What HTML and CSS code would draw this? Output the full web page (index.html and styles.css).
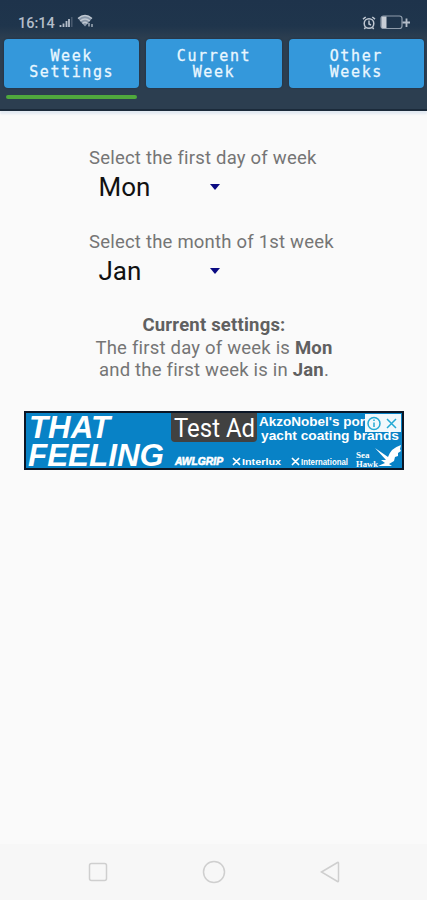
FILE: index.html
```html
<!DOCTYPE html>
<html lang="en">
<head>
    <meta charset="UTF-8">
    <meta name="viewport" content="width=device-width, initial-scale=1.0">
    <title>Week Settings</title>
    <link rel="stylesheet" href="styles.css">
</head>
<body>
    <header class="header">
        <div class="status-bar">
            <span class="clock">16:14</span>
            <svg class="signal" width="14" height="12" viewBox="0 0 14 12">
                <path d="M1.5 11V9M4.5 11V7.5M7.5 11V5M10 11V3" stroke="#b4bdc9" stroke-width="1.8"/>
                <path d="M12.8 11V1" stroke="#4d5e73" stroke-width="1.4"/>
            </svg>
            <svg class="wifi" width="18" height="15" viewBox="0 0 18 15">
                <path d="M1 4.5Q8 -1.8 15 4.5L8 12.5Z" fill="#8796a8"/>
                <path d="M1 4.6Q8 -1.6 15 4.6M3.2 7Q8 2.8 12.8 7M5.5 9.5Q8 7.2 10.5 9.5" fill="none" stroke="#c0c8d2" stroke-width="1.4"/>
                <path d="M12 9v3.500M15 10v3" stroke="#c0c8d2" stroke-width="1.2"/>
            </svg>
            <svg class="alarm" width="14" height="14" viewBox="0 0 14 14" fill="none" stroke="#c0c8d2" stroke-width="1.5">
                <circle cx="7" cy="7.5" r="4.8"/>
                <path d="M1 3.2L3.7 1M10.3 1L13 3.2M7 4.5V8L9 9M3.5 11.5L2.3 13M10.5 11.5L11.7 13"/>
            </svg>
            <svg class="battery" width="31" height="15" viewBox="0 0 31 15">
                <rect x="1" y="1" width="21" height="12.5" rx="2.5" fill="none" stroke="#8f9cab" stroke-width="1.2"/>
                <path d="M3 1.5H6.5V13H3Q1.5 13 1.5 11.5V3Q1.5 1.5 3 1.5Z" fill="#c8ced6"/>
                <path d="M22.500 7.500H30M26.500 3.500V12" stroke="#b4bdc9" stroke-width="1.8"/>
            </svg>
        </div>
        <nav class="tabs">
            <button class="tab active">Week<br>Settings</button>
            <button class="tab">Current<br>Week</button>
            <button class="tab">Other<br>Weeks</button>
        </nav>
    </header>

    <main class="content">
        <div class="field">
            <label class="label">Select the first day of week</label>
            <div class="select"><span class="value">Mon</span><span class="arrow"></span></div>
        </div>
        <div class="field">
            <label class="label">Select the month of 1st week</label>
            <div class="select"><span class="value">Jan</span><span class="arrow"></span></div>
        </div>
        <p class="summary">
            <strong>Current settings:</strong><br>
            The first day of week is <strong>Mon</strong><br>
            and the first week is in <strong>Jan</strong>.
        </p>
        <svg class="ad" width="380" height="59" viewBox="0 0 380 59">
            <rect width="380" height="59" fill="#0b1626"/>
            <rect x="2" y="2" width="376" height="55" fill="#0882c6"/>
            <g class="ad-slogan">
                <text x="5" y="26.500" textLength="81" lengthAdjust="spacingAndGlyphs">THAT</text>
                <text x="4" y="54.500" textLength="136" lengthAdjust="spacingAndGlyphs">FEELING</text>
            </g>
            <g class="ad-copy">
                <text x="235" y="15" textLength="106" lengthAdjust="spacingAndGlyphs">AkzoNobel's por</text>
                <text x="237" y="29" textLength="138" lengthAdjust="spacingAndGlyphs">yacht coating brands</text>
            </g>
            <path d="M147 2H233V27Q233 31 229 31H151Q147 31 147 27Z" fill="#414141"/>
            <text class="ad-test" x="150" y="25.500" textLength="81" lengthAdjust="spacingAndGlyphs">Test Ad</text>
            <g class="ad-brands">
                <text class="grip" x="151" y="54" textLength="48" lengthAdjust="spacingAndGlyphs">AWLGRIP</text>
                <text x="218" y="54" textLength="39" lengthAdjust="spacingAndGlyphs">Interlux</text>
                <text x="277" y="54" textLength="47" lengthAdjust="spacingAndGlyphs">International</text>
                <path d="M209 47L216 54M216 47L209 54M268 47L275 54M275 47L268 54" stroke="#fff" stroke-width="1.7"/>
            </g>
            <g class="ad-hawk">
                <text x="332" y="47">Sea</text>
                <text x="332" y="55.500" textLength="22" lengthAdjust="spacingAndGlyphs">Hawk</text>
            </g>
            <path d="M351 37L364 46Q367 37 377 34L376 38L377 40L374 42L374 45L371 46L370 50L365 53L368 55H354L361 52L357 49H362Z" fill="#fff"/>
            <rect x="341" y="3" width="36" height="18" fill="#fff" fill-opacity=".94"/>
            <g fill="none" stroke="#22a9d4" stroke-width="1.5">
                <circle cx="350" cy="12.5" r="6"/>
                <path d="M350 11.5V16M350 8.5V10M363 8L372 17M372 8L363 17"/>
            </g>
        </svg>
    </main>

    <footer class="nav-bar">
        <svg width="20" height="20" viewBox="0 0 20 20"><rect x="1.5" y="1.5" width="17" height="17" rx="2"/></svg>
        <svg width="24" height="24" viewBox="0 0 24 24"><circle cx="12" cy="12" r="10.5"/></svg>
        <svg width="20" height="22" viewBox="0 0 20 22"><path d="M1.500 11L17.500 1.500Q18.500 1 18.500 2V20Q18.500 21 17.500 20.500Z"/></svg>
    </footer>
</body>
</html>
```

FILE: styles.css
```css
* {
    box-sizing: border-box;
}
body {
    margin: 0;
    height: 900px;
    display: flex;
    flex-direction: column;
    background-color: #fafafa;
    font-family: Roboto, sans-serif;
    color: #757575;
}
.header {
    height: 111px;
    background: linear-gradient(#1e334b 0, #1f354c 26px, #2c3e50 38px, #2c3e50 100%);
    border-bottom: 2px solid #1b2a3a;
    box-shadow: 0 3px 2px #e3eaf2;
}
.status-bar {
    height: 39px;
    padding: 14px 16px 0 18px;
    display: flex;
    align-items: flex-start;
}
.clock {
    width: 37px;
    font-size: 14.5px;
    line-height: 19px;
    font-weight: 500;
    color: #b4bdc9;
}
.signal {
    margin: 2px 0 0 4px;
}
.wifi {
    margin: 0 auto 0 4px;
}
.alarm {
    margin: 2px 4px 0 0;
}
.battery {
    margin-top: 1px;
}
.tabs {
    display: grid;
    grid-template-columns: repeat(3, 1fr);
    gap: 7px;
    padding: 0 3px 0 4px;
}
.tab {
    position: relative;
    height: 49px;
    padding: 1px 0 0;
    border: 0;
    border-radius: 4px;
    background-color: #3498db;
    box-shadow: 0 0 2px #1d2d3d;
    color: #e9f7ff;
    font: 15px/16.5px "DejaVu Sans Mono", monospace;
    letter-spacing: 1.6px;
    -webkit-text-stroke: 0.3px #e9f7ff;
}
.tab.active::after {
    content: "";
    position: absolute;
    left: 2px;
    right: 2px;
    top: 56px;
    height: 4px;
    border-radius: 2px;
    background-color: #4fa83d;
}
.content {
    flex: 1;
    padding-top: 36px;
}
.field {
    height: 83.5px;
    padding-left: 89px;
}
.label {
    display: block;
    font-size: 18.5px;
    line-height: 22px;
    letter-spacing: 0.21px;
}
.select {
    width: 131px;
    height: 36px;
    padding-left: 9.5px;
    display: flex;
    align-items: center;
    justify-content: space-between;
    color: #111;
    font-size: 26px;
}
.arrow {
    border: 5.5px solid transparent;
    border-top: 6px solid #0a0a82;
    border-bottom: 0;
}
.summary {
    margin: 0;
    padding-left: 1px;
    text-align: center;
    font-size: 18.5px;
    line-height: 22.5px;
    letter-spacing: 0.2px;
}
.summary strong {
    color: #606060;
}
.ad {
    display: block;
    margin: 29px 0 0 24px;
}
.ad text {
    fill: #fff;
    font-family: "Liberation Sans", sans-serif;
    font-weight: bold;
}
.ad .ad-slogan text {
    font-size: 31px;
    font-style: italic;
}
.ad .ad-copy text {
    font-size: 13px;
}
.ad .ad-test {
    font-family: Roboto, sans-serif;
    font-size: 25px;
    font-weight: normal;
}
.ad .ad-brands text {
    font-size: 9px;
}
.ad .ad-brands .grip {
    font-size: 10px;
    font-style: italic;
    stroke: #fff;
    stroke-width: 0.6px;
}
.ad .ad-hawk text {
    font-family: "Liberation Serif", serif;
    font-size: 9px;
}
.nav-bar {
    height: 56px;
    padding: 0 87px 0 88px;
    display: flex;
    align-items: center;
    justify-content: space-between;
    background-color: #f7f7f7;
}
.nav-bar svg {
    fill: none;
    stroke: #cfcfcf;
    stroke-width: 1.5px;
}
```
